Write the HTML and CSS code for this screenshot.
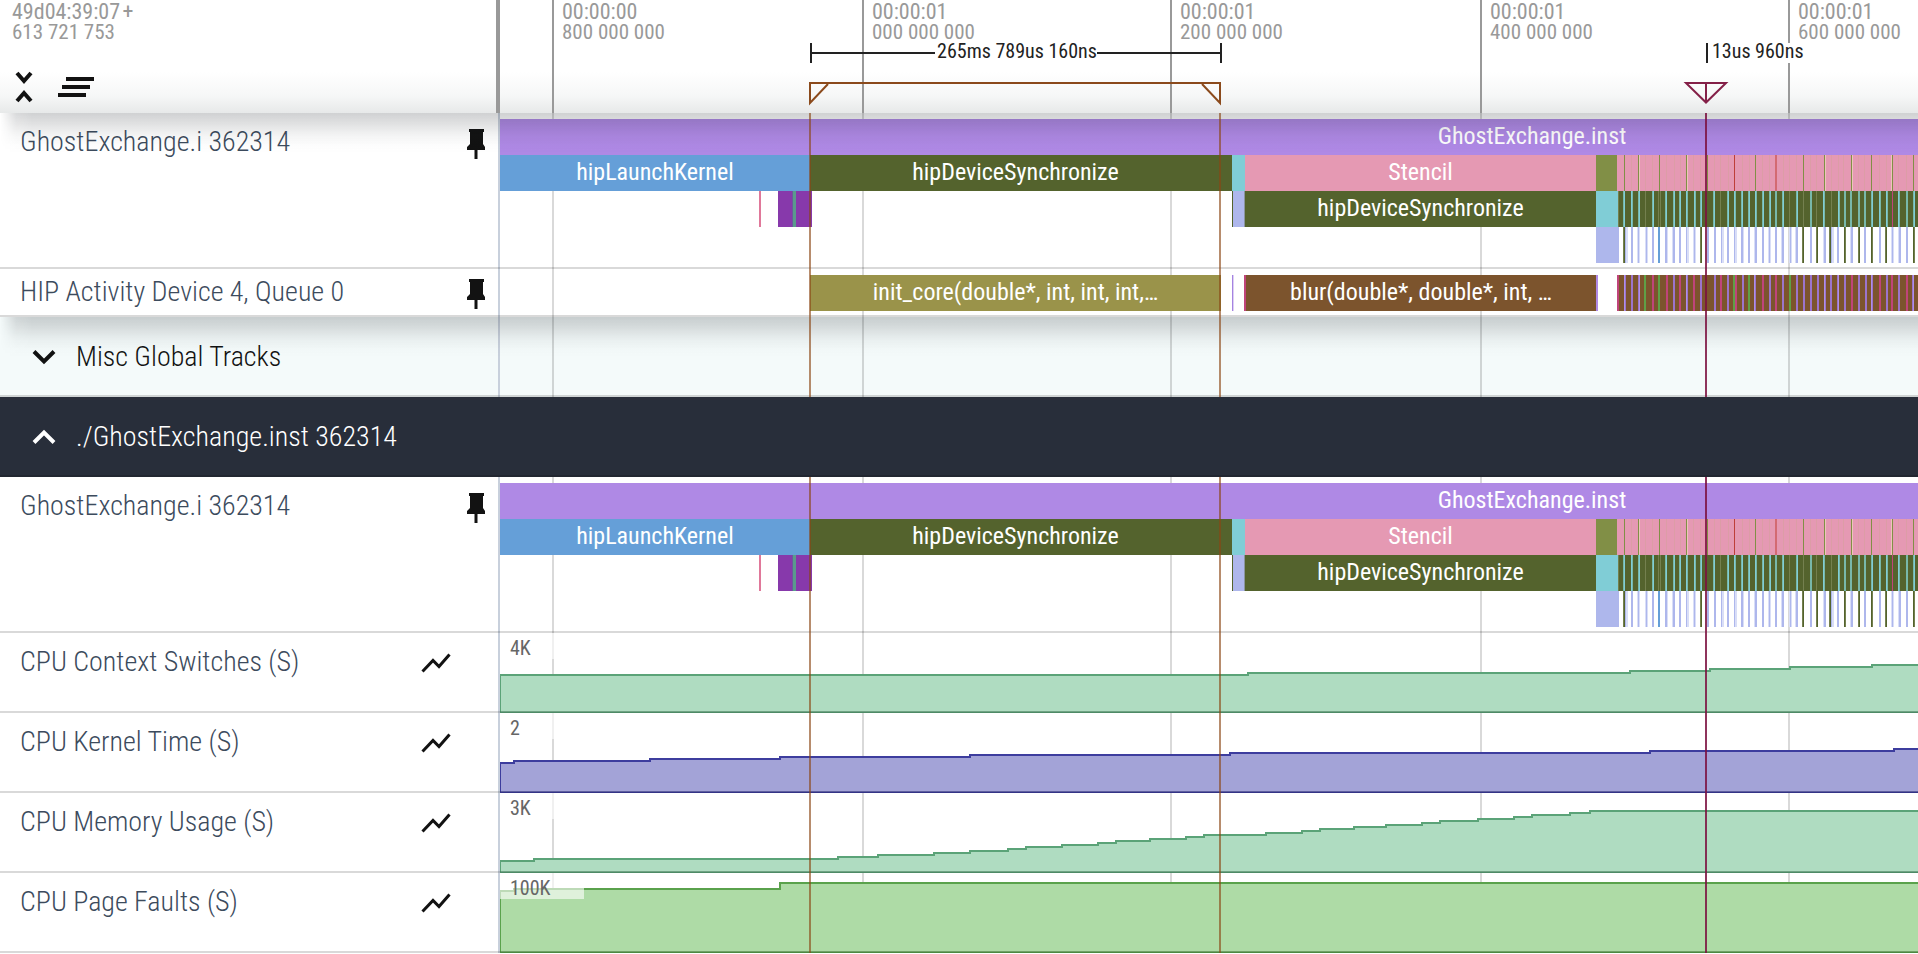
FILE: index.html
```
<!DOCTYPE html>
<html lang="en">
<head>
<meta charset="utf-8">
<title>Trace viewer</title>
<link rel="stylesheet" href="styles.css">
</head>
<body>
<main class="viewer">
  <header class="head">
    <div class="head-side">
      <div class="stamp">49d04:39:07&hairsp;+<small>613 721 753</small></div>
      <div class="tools">
        <button class="icon-btn" aria-label="Collapse all">
          <svg class="icon-fold" viewBox="0 0 20 32"><path d="M3 2l7 8 7-8M3 30l7-8 7 8"/></svg>
        </button>
        <button class="icon-btn" aria-label="Clear all pinned tracks">
          <svg class="icon-lines" viewBox="0 0 36 20"><path d="M8 0h28v4H8zM4 8h28v4H4zM0 16h28v4H0z"/></svg>
        </button>
      </div>
    </div>
    <div class="head-time" id="axis"></div>
  </header>

  <div class="tracks">
    <section class="pinned">
      <div class="track tall">
        <div class="side"><h2 class="name">GhostExchange.i 362314</h2>
          <button class="icon-btn" aria-label="Unpin"><svg class="icon-pin" viewBox="0 0 18 30"><path d="M2 0h15v3h-1v12l2 3v3h-7.500v9h-3v-9H0v-3l3-3V3H2z"/></svg></button></div>
        <div class="lane" data-slices="thread"></div>
      </div>
      <div class="track short">
        <div class="side"><h2 class="name">HIP Activity Device 4, Queue 0</h2>
          <button class="icon-btn" aria-label="Unpin"><svg class="icon-pin" viewBox="0 0 18 30"><path d="M2 0h15v3h-1v12l2 3v3h-7.500v9h-3v-9H0v-3l3-3V3H2z"/></svg></button></div>
        <div class="lane" data-slices="queue"></div>
      </div>
    </section>

    <section class="scroll">
      <div class="track group">
        <button class="side fold"><svg class="icon-chevron" viewBox="0 0 24 16"><path d="M2 2.500l10 10 10-10"/></svg>Misc Global Tracks</button>
        <div class="lane" data-slices=""></div>
      </div>
      <div class="track group open">
        <button class="side fold"><svg class="icon-chevron" viewBox="0 0 24 16"><path d="M2 13.500l10-10 10 10"/></svg>./GhostExchange.inst 362314</button>
      </div>
      <div class="track tall">
        <div class="side"><h2 class="name">GhostExchange.i 362314</h2>
          <button class="icon-btn" aria-label="Unpin"><svg class="icon-pin" viewBox="0 0 18 30"><path d="M2 0h15v3h-1v12l2 3v3h-7.500v9h-3v-9H0v-3l3-3V3H2z"/></svg></button></div>
        <div class="lane" data-slices="thread"></div>
      </div>
      <div class="track counter">
        <div class="side"><h2 class="name">CPU Context Switches (S)</h2>
          <button class="icon-btn" aria-label="Chart mode"><svg class="icon-chart" viewBox="0 0 30 20"><path d="M1.500 18.500l10.500-11 6 6L28.500 1.500"/></svg></button></div>
        <div class="lane" data-counter="switches"></div>
      </div>
      <div class="track counter">
        <div class="side"><h2 class="name">CPU Kernel Time (S)</h2>
          <button class="icon-btn" aria-label="Chart mode"><svg class="icon-chart" viewBox="0 0 30 20"><path d="M1.500 18.500l10.500-11 6 6L28.500 1.500"/></svg></button></div>
        <div class="lane" data-counter="kernel"></div>
      </div>
      <div class="track counter">
        <div class="side"><h2 class="name">CPU Memory Usage (S)</h2>
          <button class="icon-btn" aria-label="Chart mode"><svg class="icon-chart" viewBox="0 0 30 20"><path d="M1.500 18.500l10.500-11 6 6L28.500 1.500"/></svg></button></div>
        <div class="lane" data-counter="memory"></div>
      </div>
      <div class="track counter">
        <div class="side"><h2 class="name">CPU Page Faults (S)</h2>
          <button class="icon-btn" aria-label="Chart mode"><svg class="icon-chart" viewBox="0 0 30 20"><path d="M1.500 18.500l10.500-11 6 6L28.500 1.500"/></svg></button></div>
        <div class="lane" data-counter="faults"></div>
      </div>
    </section>
    <div class="markers" id="markers"></div>
  </div>
</main>
<script src="timeline.js"></script>
</body>
</html>
```

FILE: styles.css
```
* { box-sizing: border-box; }

body {
  margin: 0;
  background: #fff;
  font-family: "Roboto Condensed", Roboto, sans-serif;
  color: #121212;
}

.viewer { height: 100vh; overflow: hidden; }

/* Time axis */
.head {
  display: grid;
  grid-template-columns: 500px 1fr;
  height: 113px;
  background: linear-gradient(#fff 72px, #f6f7f7 96px, #e7e9e9 113px);
}
.head-side {
  display: flex;
  flex-direction: column;
  justify-content: space-between;
  padding: 0 12px 10px;
  border-right: 4px solid #999;
}
.stamp { padding-top: 2px; font-size: 22px; line-height: 20px; color: #999; white-space: nowrap; }
.stamp small { display: block; font-size: 21px; }
.tools { display: flex; align-items: center; gap: 24px; padding-left: 2px; }
.head-time { position: relative; overflow: hidden; }
.tick {
  position: absolute;
  top: 0;
  bottom: 0;
  padding-left: 8px;
  border-left: 2px solid #999;
}
.span { position: absolute; top: 43px; height: 20px; display: flex; align-items: center; font-size: 20px; line-height: 16px; color: #222; white-space: nowrap; }
.span.range { border: solid #222; border-width: 0 2px; }
.span.range::before, .span.range::after { content: ""; flex: 1; height: 2px; background: #222; }
.span.instant { border-left: 2px solid #222; }
.span b { font-weight: 400; padding: 0 0 4px 2px; }
.span.instant b { padding-left: 4px; background: #fff; }
.flag { position: absolute; top: 82px; height: 22px; overflow: visible; fill: none; stroke-width: 2; }
.flag.range { border-top: 2px solid #8b4a1c; display: flex; justify-content: space-between; }
.flag svg { width: 20px; height: 20px; fill: none; stroke: #8b4a1c; stroke-width: 2; overflow: visible; }
.flag.instant { width: 44px; margin-left: -21px; stroke: #842048; }

/* Icons */
.icon-btn { display: flex; padding: 0; border: 0; background: none; color: #121212; }
.icon-btn path { fill: currentColor; }
.icon-fold { width: 20px; height: 32px; }
.icon-lines { width: 36px; height: 20px; }
.icon-pin { width: 18px; height: 30px; }
.icon-chart { width: 30px; height: 20px; margin-right: 34px; }
.icon-chevron { width: 24px; height: 16px; }
.icon-btn .icon-fold path, .icon-btn .icon-chart path, .icon-chevron path { fill: none; stroke: currentColor; stroke-width: 4; }
.icon-btn .icon-chart path { stroke-width: 3; }

/* Tracks */
.tracks, .pinned, .scroll { position: relative; }
.pinned::before, .scroll::before {
  content: "";
  position: absolute;
  z-index: 2;
  top: 0;
  left: 0;
  right: 0;
  height: 40px;
  background: linear-gradient(rgba(20, 26, 32, .2), rgba(20, 26, 32, .15) 20%, rgba(20, 26, 32, .05) 55%, rgba(20, 26, 32, .01) 80%, transparent);
  mask-image: linear-gradient(90deg, transparent, rgba(0, 0, 0, .8) 16px, #000 32px);
  pointer-events: none;
}
.track { position: relative; display: grid; grid-template-columns: 500px 1fr; }
.track::after {
  content: "";
  position: absolute;
  left: 0;
  right: 0;
  bottom: 0;
  height: 2px;
  background: rgba(0, 0, 0, .15);
}
.tall { height: 156px; }
.short { height: 48px; }
.counter, .group { height: 80px; }
.side {
  display: flex;
  align-items: flex-start;
  justify-content: space-between;
  padding: 13px 13px 0 20px;
  border-right: 2px solid #c8d0dc;
}
.short .side { padding-top: 7px; }
.name { margin: 0; font-size: 28px; line-height: 32px; font-weight: 300; color: #3c4b5d; white-space: nowrap; }
.side .icon-pin { margin-top: 3px; }
.side .icon-chart { margin-top: 7px; }
.fold {
  align-items: center;
  justify-content: flex-start;
  gap: 20px;
  padding: 0 0 0 32px;
  border-width: 0 2px 0 0;
  background: none;
  font: 300 28px/32px "Roboto Condensed", Roboto, sans-serif;
  color: #121212;
  white-space: nowrap;
}
.group { background: #f4fafa; }
.open { background: #282e3a; z-index: 4; }
.open .fold { color: #fff; border-color: transparent; }

.lane { position: relative; overflow: hidden; }
.grid { position: absolute; top: 0; bottom: 0; width: 2px; background: rgba(0, 0, 0, .15); }
.slice {
  position: absolute;
  height: 36px;
  overflow: hidden;
  font-size: 24px;
  line-height: 34px;
  font-weight: 400;
  color: #fff;
  text-align: center;
  white-space: nowrap;
}
.plot { position: absolute; top: 0; left: 0; width: 100%; height: 80px; }
.plot path { stroke-width: 2; vector-effect: non-scaling-stroke; }
.scale { position: absolute; top: 0; left: 0; width: 84px; height: 26px; padding-left: 10px; background: rgba(255, 255, 255, .6); font-size: 20px; line-height: 30px; color: #666; }

.markers { position: absolute; z-index: 3; top: 0; bottom: 0; left: 500px; right: 0; pointer-events: none; }
.markers i { position: absolute; top: 0; bottom: 0; width: 2px; }
```

FILE: timeline.js
```
// All positions are in axis units; the visible window is SPAN units wide.
const SPAN = 1418;
const pct = v => (v / SPAN * 100) + '%';

const GREEN = '#54632d', OLIVE = '#818f46', PINK = '#e599b3', CYAN = '#80cdd6', TEAL = '#78b8aa',
  LAV = '#aeb7ec', VIOLET = '#af89e5', BROWN = '#7c542d', MAGENTA = '#c0447a', LIME = '#5fa046',
  BLUE = '#659fd8', LILAC = '#9c74cc';

const ticks = [
  [52, '00:00:00', '800 000 000'], [362, '00:00:01', '000 000 000'], [670, '00:00:01', '200 000 000'],
  [980, '00:00:01', '400 000 000'], [1288, '00:00:01', '600 000 000']
];

function add(parent, tag, cls, start, width, color, text) {
  const el = document.createElement(tag);
  el.className = cls;
  el.style.left = pct(start);
  if (width) el.style.width = pct(width);
  if (color) el.style.background = color;
  if (text) el.innerHTML = text;
  parent.append(el);
  return el;
}

// [depth, start, width, colour, label]
const thread = [
  [0, 0, 2064, VIOLET, 'GhostExchange.inst'],
  [1, 0, 310, BLUE, 'hipLaunchKernel'],
  [1, 310, 411, GREEN, 'hipDeviceSynchronize'], [1, 721, 11, GREEN],
  [1, 732, 13, CYAN], [1, 745, 351, PINK, 'Stencil'], [1, 1096, 21, OLIVE], [1, 1117, 301, PINK],
  [2, 259, 2, '#e0789a'], [2, 278, 34, '#8739ab'], [2, 292, 1, '#6a5a9c'], [2, 293, 3, '#5a9a8c'],
  [2, 732, 1, GREEN], [2, 733, 11, LAV], [2, 744, 1, '#8a94a0'],
  [2, 745, 351, GREEN, 'hipDeviceSynchronize'], [2, 1096, 22, CYAN], [2, 1118, 300, GREEN],
  [3, 1096, 23, LAV]
];
const queue = [
  [0, 310, 411, '#9a934a', 'init_core(double*, int, int, int,…'],
  [0, 732, 1, '#a583e0'], [0, 733, 1, '#ddd0f5'],
  [0, 744, 2, MAGENTA], [0, 746, 350, BROWN, 'blur(double*, double*, int, …'], [0, 1096, 2, VIOLET],
  [0, 1117, 2, MAGENTA], [0, 1119, 299, BROWN]
];
function stripes(list, depth, width, color, starts) {
  for (const s of starts) list.push([depth, s, width, color]);
}
stripes(thread, 1, 1, '#dc9da6', [1131, 1145, 1152, 1166, 1174, 1180, 1193, 1200, 1214, 1220, 1228, 1242,
  1249, 1262, 1269, 1283, 1289, 1296, 1310, 1316, 1331, 1338, 1343, 1358, 1364, 1379, 1386, 1398, 1406]);
stripes(thread, 1, 1, '#ecc5ba', [1139, 1187, 1325, 1352, 1391]);
stripes(thread, 1, 1, OLIVE, [1124, 1138, 1159, 1186, 1207, 1255, 1303, 1324, 1351, 1371, 1392, 1413]);
stripes(thread, 1, 1, '#bd3e39', [1234]);
stripes(thread, 1, 2, '#d36a72', [1275]);
stripes(thread, 2, 1, '#74804f', [1118, 1145, 1158, 1160, 1220, 1289, 1303, 1316, 1331]);
stripes(thread, 2, 2, TEAL, [1123, 1131, 1138, 1152, 1165, 1173, 1179, 1186, 1194, 1200, 1213, 1227, 1234, 1241, 1248,
  1255, 1262, 1269, 1275, 1282, 1296, 1310, 1323, 1338, 1344, 1350, 1358, 1364, 1371, 1379, 1386, 1398, 1406, 1413]);
stripes(thread, 2, 1, CYAN, [1124, 1131, 1139, 1153, 1166, 1174, 1180, 1186, 1194, 1201, 1214, 1228, 1234, 1242, 1249,
  1255, 1263, 1270, 1283, 1297, 1323, 1338, 1372, 1379, 1386, 1398, 1414]);
stripes(thread, 2, 1, MAGENTA, [1392]);
stripes(thread, 3, 3, '#d9def7', [1125, 1137, 1145, 1165, 1172, 1186, 1193, 1221, 1234, 1241, 1254, 1268, 1281,
  1289, 1295, 1323, 1331, 1350, 1391, 1398]);
stripes(thread, 3, 2, LAV, [1131, 1152, 1165, 1173, 1179, 1207, 1214, 1227, 1241, 1248, 1255, 1262, 1275, 1282, 1296,
  1310, 1324, 1337, 1351, 1364, 1379, 1399, 1406]);
stripes(thread, 3, 1, LAV, [1125, 1138, 1146, 1166, 1186, 1194, 1221, 1234, 1269, 1290, 1331, 1392]);
stripes(thread, 3, 2, BLUE, [1158]);
stripes(thread, 3, 2, '#74804f', [1123, 1200, 1302, 1316, 1329, 1344, 1358, 1371, 1385, 1413]);
stripes(thread, 3, 1, GREEN, [1124, 1201, 1303, 1317, 1330, 1344, 1359, 1371, 1386, 1413]);

stripes(queue, 0, 2, LILAC, [1124, 1131, 1138, 1173, 1186, 1200, 1214, 1227, 1242, 1254, 1269, 1282, 1296, 1303, 1310,
  1317, 1324, 1330, 1337, 1344, 1358, 1365, 1371, 1386, 1398, 1412]);
stripes(queue, 0, 1, '#b090e8', [1124, 1139, 1186, 1254, 1324, 1338, 1371, 1413]);
stripes(queue, 0, 2, MAGENTA, [1152, 1166, 1179, 1193, 1220, 1235, 1262, 1275, 1351, 1379, 1391, 1406]);
stripes(queue, 0, 2, LIME, [1144, 1158, 1233, 1248, 1289]);

const slices = { thread, queue };

// Step curves: [start, height from lane top]
const counters = {
  switches: { max: '4K', fill: '#afdcc1', line: '#5ba378', steps: [[0, 42], [748, 40], [1130, 38], [1210, 36], [1290, 34], [1372, 32]] },
  kernel: { max: '2', fill: '#a3a3d7', line: '#3d3d9e', steps: [[0, 50], [14, 48], [150, 46], [280, 44], [470, 42], [730, 40], [1150, 38], [1394, 36]] },
  memory: { max: '3K', fill: '#afdcc1', line: '#5ba378', steps: [[0, 68], [34, 66], [338, 64], [378, 62], [434, 60], [470, 58],
    [508, 56], [526, 54], [562, 52], [598, 50], [616, 48], [650, 46], [686, 44], [704, 42], [766, 40], [802, 38], [820, 36],
    [854, 34], [886, 32], [922, 30], [940, 28], [978, 26], [1014, 24], [1032, 22], [1070, 20], [1090, 18]] },
  faults: { max: '100K', fill: '#aedba6', line: '#5aa24c', steps: [[0, 18], [14, 16], [280, 10]] }
};

const axis = document.getElementById('axis');
for (const [at, a, b] of ticks) add(axis, 'div', 'tick stamp', at, 0, '', a + '<small>' + b + '</small>');
add(axis, 'div', 'span range', 310, 412, '', '<b>265ms 789us 160ns</b>');
add(axis, 'div', 'span instant', 1206, 0, '', '<b>13us 960ns</b>');
add(axis, 'div', 'flag range', 309, 412, '',
  '<svg viewBox="0 0 20 20"><path d="M1 0v19L19 0"/></svg><svg viewBox="0 0 20 20"><path d="M19 0v19L1 0"/></svg>');
const ns = 'http://www.w3.org/2000/svg';
const flag = document.createElementNS(ns, 'svg');
flag.setAttribute('class', 'flag instant');
flag.setAttribute('viewBox', '0 0 44 22');
flag.style.left = pct(1205);
flag.innerHTML = '<path d="M2 1h40L22 20.500zM22 1v20"/>';
axis.append(flag);

for (const lane of document.querySelectorAll('.lane')) {
  for (const [at] of ticks) add(lane, 'i', 'grid', at);
  for (const [depth, start, width, color, label] of slices[lane.dataset.slices] || []) {
    add(lane, 'div', 'slice', start, width, color, label).style.top = 6 + depth * 36 + 'px';
  }
  const c = counters[lane.dataset.counter];
  if (!c) continue;
  let d = 'M0 79';
  for (const [x, y] of c.steps) d += 'H' + x + 'V' + y;
  const svg = document.createElementNS(ns, 'svg');
  svg.setAttribute('class', 'plot');
  svg.setAttribute('viewBox', '0 0 ' + SPAN + ' 80');
  svg.setAttribute('preserveAspectRatio', 'none');
  svg.innerHTML = '<path d="' + d + 'H' + (SPAN + 4) + 'V79.500H0z" fill="' + c.fill + '" stroke="' + c.line + '"/>';
  lane.append(svg);
  add(lane, 'div', 'scale', 0, 0, '', c.max);
}

const markers = document.getElementById('markers');
add(markers, 'i', '', 309, 0, 'rgba(139, 69, 19, .62)');
add(markers, 'i', '', 719, 0, 'rgba(139, 69, 19, .62)');
add(markers, 'i', '', 1205, 0, 'rgba(123, 16, 64, .85)');
```
